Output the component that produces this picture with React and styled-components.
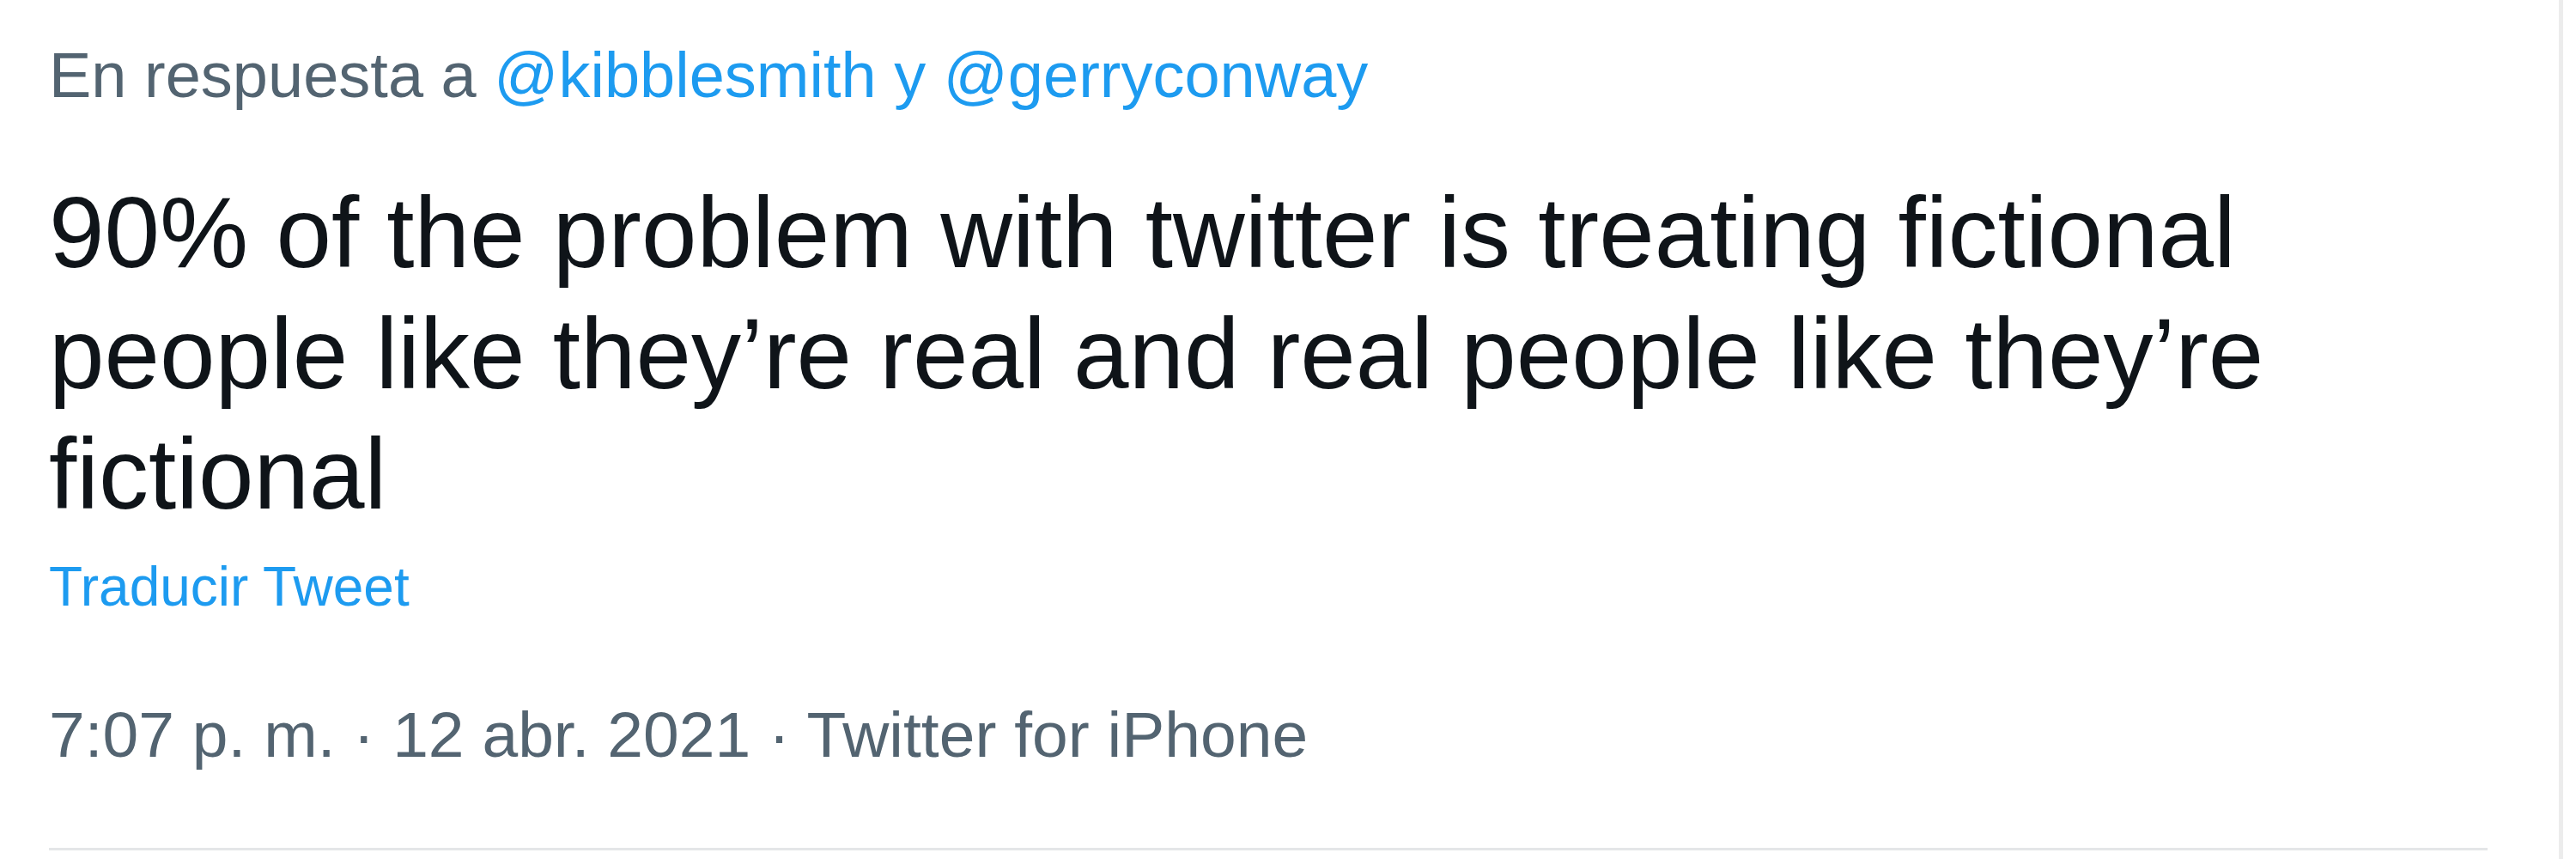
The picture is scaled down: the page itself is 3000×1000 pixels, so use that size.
import React from "react";
import styled, { createGlobalStyle } from "styled-components";

const Global = createGlobalStyle`
  html, body {
    margin: 0;
    padding: 0;
    background: #ffffff;
  }
  body {
    font-family: "Liberation Sans", Arial, sans-serif;
    -webkit-font-smoothing: antialiased;
  }
`;

const Page = styled.div`
  display: flex;
  width: 3000px;
  height: 1000px;
  background: #ffffff;
  overflow: hidden;
`;

const Column = styled.article`
  box-sizing: border-box;
  width: 2985px;
  height: 1000px;
  border-right: 5px solid #ececec;
  padding: 38px 83px 0 57px;
  display: flex;
  flex-direction: column;
`;

const ReplyLine = styled.div`
  font-size: 74px;
  line-height: 100px;
  color: #536471;
  white-space: nowrap;
`;

const Mention = styled.span`
  color: #1d9bf0;
`;

const TweetText = styled.p`
  margin: 63px 0 0;
  font-size: 116px;
  line-height: 140.5px;
  color: #0f1419;
`;

const TranslateLink = styled.a`
  margin-top: 20px;
  font-size: 64px;
  line-height: 80px;
  color: #1d9bf0;
  text-decoration: none;
  align-self: flex-start;
`;

const Meta = styled.div`
  margin-top: 82px;
  font-size: 75px;
  line-height: 100px;
  color: #536471;
  white-space: nowrap;
`;

const Divider = styled.hr`
  margin: 82px 0 0;
  border: none;
  height: 3px;
  background: #e4e6e8;
`;

export default function App() {
  return (
    <>
      <Global />
      <Page>
        <Column>
          <ReplyLine>
            En respuesta a <Mention>@kibblesmith</Mention> <Mention>y</Mention>{" "}
            <Mention>@gerryconway</Mention>
          </ReplyLine>
          <TweetText>
            90% of the problem with twitter is treating fictional people like
            they’re real and real people like they’re fictional
          </TweetText>
          <TranslateLink href="#">Traducir Tweet</TranslateLink>
          <Meta>7:07 p. m. · 12 abr. 2021 · Twitter for iPhone</Meta>
          <Divider />
        </Column>
      </Page>
    </>
  );
}
